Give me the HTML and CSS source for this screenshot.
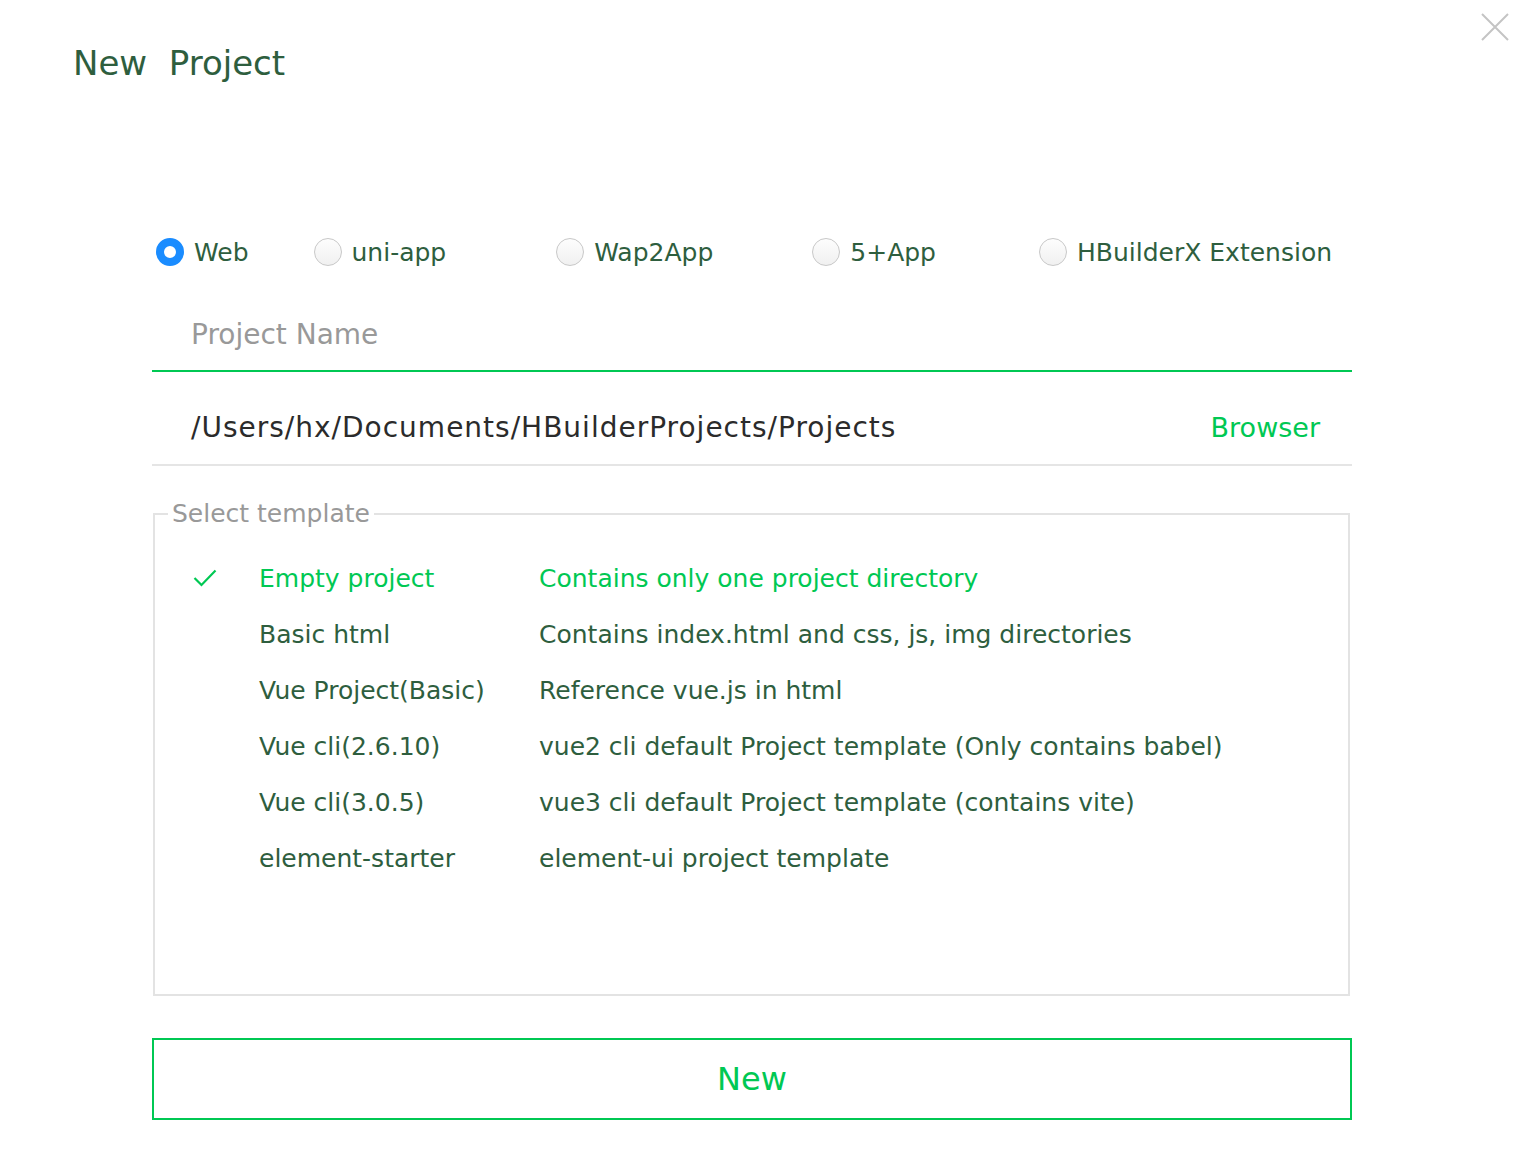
FILE: index.html
```html
<!DOCTYPE html>
<html lang="en">
<head>
    <meta charset="UTF-8">
    <title>New Project</title>
    <link rel="stylesheet" href="styles.css">
</head>
<body>

<div class="dialog">
    <button class="close-button" aria-label="close">
        <svg width="28" height="28" viewBox="0 0 28 28">
            <path d="M1 1 L27 27 M27 1 L1 27" stroke="#c4c4c4" stroke-width="2" fill="none"/>
        </svg>
    </button>

    <h1 class="title">New&nbsp;&nbsp;Project</h1>

    <div class="content">
        <div class="type-row">
            <label class="type-item item-web"><span class="radio checked"></span>Web</label>
            <label class="type-item item-uni"><span class="radio"></span>uni-app</label>
            <label class="type-item item-wap"><span class="radio"></span>Wap2App</label>
            <label class="type-item item-five"><span class="radio"></span>5+App</label>
            <label class="type-item item-ext"><span class="radio"></span>HBuilderX Extension</label>
        </div>

        <div class="field field-name">
            <span class="placeholder">Project Name</span>
        </div>

        <div class="field field-path">
            <span class="path">/Users/hx/Documents/HBuilderProjects/Projects</span>
            <span class="browse">Browser</span>
        </div>

        <fieldset class="templates">
            <legend>Select template</legend>
            <div class="template-row selected">
                <span class="check">
                    <svg width="24" height="20" viewBox="0 0 24 20">
                        <path d="M1.5 10 L8.5 17 L22.5 2.5" stroke="#00c853" stroke-width="2.2" fill="none"/>
                    </svg>
                </span>
                <span class="tpl-name">Empty project</span>
                <span class="tpl-desc">Contains only one project directory</span>
            </div>
            <div class="template-row">
                <span class="check"></span>
                <span class="tpl-name">Basic html</span>
                <span class="tpl-desc">Contains index.html and css, js, img directories</span>
            </div>
            <div class="template-row">
                <span class="check"></span>
                <span class="tpl-name">Vue Project(Basic)</span>
                <span class="tpl-desc">Reference vue.js in html</span>
            </div>
            <div class="template-row">
                <span class="check"></span>
                <span class="tpl-name">Vue cli(2.6.10)</span>
                <span class="tpl-desc">vue2 cli default Project template (Only contains babel)</span>
            </div>
            <div class="template-row">
                <span class="check"></span>
                <span class="tpl-name">Vue cli(3.0.5)</span>
                <span class="tpl-desc">vue3 cli default Project template (contains vite)</span>
            </div>
            <div class="template-row">
                <span class="check"></span>
                <span class="tpl-name">element-starter</span>
                <span class="tpl-desc">element-ui project template</span>
            </div>
        </fieldset>

        <button class="new-button">New</button>
    </div>
</div>

</body>
</html>
```

FILE: styles.css
```css
body {
    margin: 0;
    padding: 0;
    background-color: #fff;
    font-family: "DejaVu Sans", "Liberation Sans", sans-serif;
    color: #2e5e3e;
}
.dialog {
    position: relative;
    width: 1522px;
    height: 1176px;
    box-sizing: border-box;
    padding-top: 40px;
}
.close-button {
    position: absolute;
    top: 13px;
    right: 13px;
    width: 28px;
    height: 28px;
    padding: 0;
    border: none;
    background: none;
}
.close-button svg {
    display: block;
}
.title {
    margin: 0 0 0 73px;
    font-size: 34px;
    font-weight: normal;
    line-height: 46px;
    color: #2e5e3e;
}
.content {
    width: 1200px;
    margin: 0 0 0 152px;
}
.type-row {
    display: flex;
    align-items: center;
    margin-top: 136px;
    height: 60px;
    font-size: 25px;
}
.type-item {
    display: flex;
    align-items: center;
}
.item-web { margin-left: 4px; }
.item-uni { margin-left: 65px; }
.item-wap { margin-left: 110px; }
.item-five { margin-left: 99px; }
.item-ext { margin-left: 103px; }
.radio {
    width: 28px;
    height: 28px;
    box-sizing: border-box;
    border: 1px solid #c8c8c8;
    border-radius: 50%;
    background: linear-gradient(#fdfdfd, #f0f0f0);
    margin-right: 10px;
}
.radio.checked {
    border: 8px solid #1a8cff;
    background: #fff;
}
.field {
    display: flex;
    align-items: center;
    justify-content: space-between;
    box-sizing: border-box;
    padding: 16px 32px 0 39px;
    font-size: 28px;
}
.field-name {
    height: 90px;
    border-bottom: 2px solid #00c853;
}
.placeholder {
    color: #999;
}
.field-path {
    height: 94px;
    padding-top: 18px;
    border-bottom: 2px solid #e5e5e5;
}
.path {
    color: #2b2b2b;
    letter-spacing: 1px;
}
.browse {
    color: #00c853;
    font-size: 27px;
}
.templates {
    margin: 33px 2px 0 1px;
    padding: 22px 0 0 0;
    border: 2px solid #e3e3e3;
    height: 497px;
    box-sizing: border-box;
}
.templates legend {
    padding: 0 4px;
    margin-left: 13px;
    color: #999;
    font-size: 25px;
}
.template-row {
    display: flex;
    align-items: center;
    height: 56px;
    margin-left: 38px;
    font-size: 25px;
}
.template-row.selected {
    color: #00c853;
}
.check {
    width: 66px;
    display: flex;
    align-items: center;
}
.tpl-name {
    width: 280px;
}
.new-button {
    display: block;
    width: 1200px;
    height: 82px;
    margin-top: 42px;
    border: 2px solid #00c853;
    background: #fff;
    color: #00c853;
    font-family: "DejaVu Sans", "Liberation Sans", sans-serif;
    font-size: 32px;
}
```
